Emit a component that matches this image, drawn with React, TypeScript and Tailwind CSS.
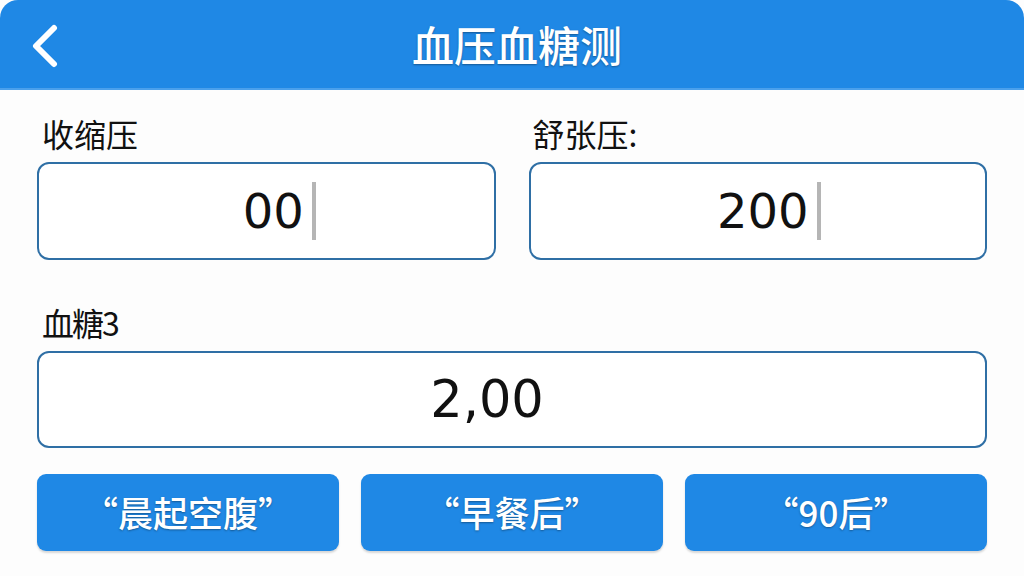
import React from "react";

const cjk = { fontFamily: '"Noto Sans CJK SC", "Noto Sans", sans-serif' };
const num = { fontFamily: '"DejaVu Sans", "Noto Sans CJK SC", sans-serif' };

function Cursor() {
  return <span className="inline-block w-[4px] h-[58px] bg-[#b5b5b5] ml-[8px]" />;
}

export default function App() {
  return (
    <div className="w-[1024px] h-[576px] bg-[#fdfdfd] overflow-hidden flex flex-col" style={cjk}>
      <header className="h-[90px] bg-[#1f88e5] rounded-t-[18px] flex items-center relative border-b-[2px] border-[#4aa0ec]">
        <svg className="absolute left-[28px] top-[24px]" width="32" height="44" viewBox="0 0 32 44">
          <path d="M26 4 L8 22 L26 40" fill="none" stroke="white" strokeWidth="6" strokeLinecap="round" strokeLinejoin="round" />
        </svg>
        <h1 className="flex-1 text-center text-white text-[42px] font-medium leading-none pl-[10px] [text-shadow:0_1px_2px_rgba(0,0,0,0.35)]">
          血压血糖测
        </h1>
      </header>

      <main className="flex flex-col px-[37px] pt-[24px]">
        <div className="grid grid-cols-2 gap-x-[33px]">
          <div className="flex flex-col">
            <label className="text-[32px] leading-[38px] text-[#111] pl-[5px]">收缩压</label>
            <div className="mt-[10px] h-[98px] border-[2px] border-[#2f6fa5] rounded-[12px] bg-white flex items-center justify-center pl-[26px]">
              <span className="text-[48px] text-[#111] leading-none" style={num}>00</span>
              <Cursor />
            </div>
          </div>
          <div className="flex flex-col">
            <label className="text-[32px] leading-[38px] text-[#111] pl-[4px]">舒张压:</label>
            <div className="mt-[10px] h-[98px] border-[2px] border-[#2f6fa5] rounded-[12px] bg-white flex items-center justify-center pl-[22px]">
              <span className="text-[48px] text-[#111] leading-none" style={num}>200</span>
              <Cursor />
            </div>
          </div>
        </div>

        <label className="mt-[43px] text-[32px] leading-[38px] text-[#111] pl-[5px] tracking-[-2px]">血糖3</label>
        <div className="mt-[10px] h-[97px] border-[2px] border-[#2f6fa5] rounded-[12px] bg-white flex items-center justify-center pr-[50px]">
          <span className="text-[51px] text-[#111] leading-none" style={num}>2,00</span>
        </div>

        <div className="mt-[26px] grid grid-cols-3 gap-x-[22px]">
          {["“晨起空腹”", "“早餐后”", "“90后”"].map((t) => (
            <button
              key={t}
              className="h-[77px] rounded-[9px] bg-[#1f88e5] text-white text-[35px] font-medium flex items-center justify-center shadow-[0_2px_2px_rgba(0,0,0,0.15)] [text-shadow:0_1px_2px_rgba(0,0,0,0.35)]"
            >
              {t}
            </button>
          ))}
        </div>
      </main>
    </div>
  );
}
